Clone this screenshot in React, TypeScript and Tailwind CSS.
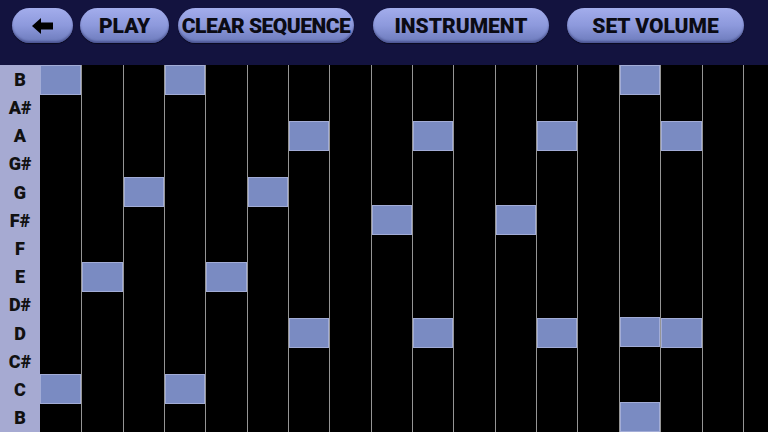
import React from 'react';

const NOTES = ['B', 'A#', 'A', 'G#', 'G', 'F#', 'F', 'E', 'D#', 'D', 'C#', 'C', 'B'];
const COLS = 18;

// column index -> active row indexes
const ACTIVE: Record<number, number[]> = {
  0: [0, 11],
  1: [7],
  2: [4],
  3: [0, 11],
  4: [7],
  5: [4],
  6: [2, 9],
  8: [5],
  9: [2, 9],
  11: [5],
  12: [2, 9],
  14: [0, 9, 12],
  15: [2, 9],
};

const btn =
  'h-[35px] shrink-0 rounded-full bg-gradient-to-b from-[#a3adec] via-[#8d99dc] to-[#6c7abb] shadow-[inset_0_-2px_2px_rgba(40,44,100,0.45),0_1px_1px_rgba(0,0,0,0.5)] flex items-center justify-center text-[#0b0b14] font-black text-[21px]';

export default function App() {
  return (
    <div
      className="w-[768px] h-[432px] overflow-hidden bg-black flex flex-col"
      style={{ fontFamily: 'Roboto, "Noto Sans", sans-serif' }}
    >
      <div className="h-[65px] shrink-0 bg-[#13133f] flex items-start pt-[8px] pl-[12px]">
        <button className={`${btn} w-[61px]`}>
          <svg width="22" height="16" viewBox="0 0 22 16">
            <polygon points="0,8 9,0 9,4.5 21,4.5 21,11.5 9,11.5 9,16" fill="#000" />
          </svg>
        </button>
        <button className={`${btn} w-[89px] ml-[7px] pt-[3px]`}>PLAY</button>
        <button className={`${btn} w-[176px] ml-[9px] pt-[3px] text-[20px] tracking-[-0.5px]`}>CLEAR SEQUENCE</button>
        <button className={`${btn} w-[176px] ml-[19px] pt-[3px]`}>INSTRUMENT</button>
        <button className={`${btn} w-[177px] ml-[18px] pt-[3px]`}>SET VOLUME</button>
      </div>

      <div className="flex flex-1">
        <div className="w-[40px] shrink-0 bg-[#a6aad2] flex flex-col">
          {NOTES.map((n, i) => (
            <div
              key={i}
              className="flex-1 flex items-center justify-center text-[18px] font-black text-[#111]"
            >
              {n}
            </div>
          ))}
        </div>
        <div className="flex">
          {Array.from({ length: COLS }).map((_, c) => (
            <div
              key={c}
              className={`w-[41.35px] shrink-0 flex flex-col ${c === 0 ? '' : 'border-l border-[#959595]'}`}
            >
              {NOTES.map((_, r) => {
                const on = (ACTIVE[c] || []).includes(r);
                return (
                  <div
                    key={r}
                    className={`flex-1 ${on ? 'bg-[#7a8bc2] border border-[#a2acd6]' : 'bg-black'}`}
                  />
                );
              })}
            </div>
          ))}
        </div>
      </div>
    </div>
  );
}
